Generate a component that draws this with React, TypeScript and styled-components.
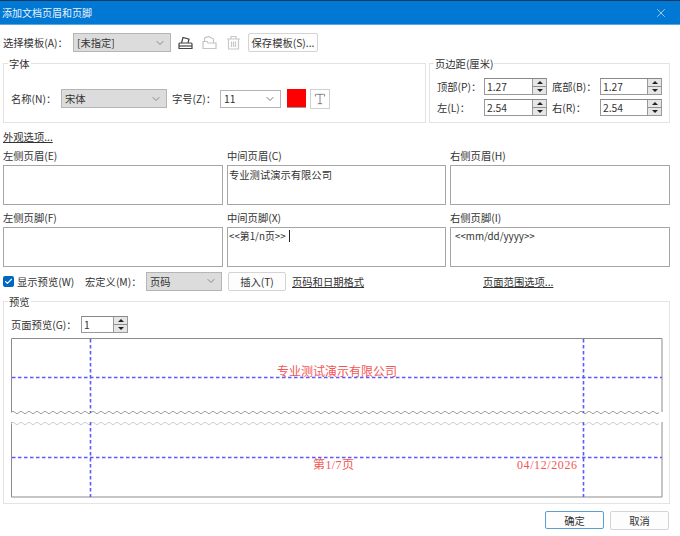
import { ChevronDown, Check, Type, X } from "lucide-react";
import styled, { createGlobalStyle } from "styled-components";

const UI_FONT = `"Noto Sans CJK SC", "Liberation Sans", sans-serif`;
const PREVIEW_FONT = `"Liberation Serif", "Noto Sans CJK SC", serif`;

const GlobalStyle = createGlobalStyle`
  html, body {
    margin: 0;
    padding: 0;
    background: #fff;
  }
  * {
    box-sizing: border-box;
  }
`;

const Dialog = styled.div`
  width: 680px;
  height: 536px;
  overflow: hidden;
  background: #fff;
  color: #333;
  font-family: ${UI_FONT};
  font-size: 10.3px;
  line-height: 13px;
`;

const TitleBar = styled.div`
  height: 25px;
  display: flex;
  align-items: center;
  justify-content: space-between;
  padding: 0 12px 0 2px;
  background: #0078d4;
  border-top: 1px solid #12395f;
  border-bottom: 1px solid #5ba8e4;
  color: #e8f3fc;
  font-size: 10px;
`;

const Body = styled.div`
  padding: 8px 10px 0 3px;
`;

const TemplateRow = styled.div`
  height: 19px;
  display: flex;
  align-items: center;
`;

const FieldLabel = styled.span<{ $width: number; $inset?: number }>`
  flex: none;
  width: ${({ $width }) => $width}px;
  padding-left: ${({ $inset }) => $inset ?? 0}px;
  white-space: nowrap;
`;

const Select = styled.div<{ $width: number; $plain?: boolean }>`
  flex: none;
  width: ${({ $width }) => $width}px;
  height: ${({ $plain }) => ($plain ? 18 : 19)}px;
  display: flex;
  align-items: center;
  justify-content: space-between;
  padding: 0 4px 0 3px;
  background: ${({ $plain }) => ($plain ? "#fff" : "#dcdcdc")};
  border: 1px solid #b5b5b5;
  color: #333;
`;

const IconGroup = styled.div`
  display: flex;
  align-items: center;
  gap: 9px;
  margin: 0 7px 0 7px;
`;

const PushButton = styled.button<{ $width: number; $primary?: boolean }>`
  flex: none;
  width: ${({ $width }) => $width}px;
  height: ${({ $primary }) => ($primary ? 18 : 19)}px;
  padding: 0;
  background: #fdfdfd;
  border: 1px solid ${({ $primary }) => ($primary ? "#5a9fd4" : "#d4d4d4")};
  border-radius: 2px;
  color: #333;
  font: inherit;
`;

const GroupRow = styled.div`
  display: grid;
  grid-template-columns: 423px 241px;
  column-gap: 3px;
  margin-top: 11px;
  height: 60px;
`;

const Group = styled.div`
  position: relative;
  border: 1px solid #e3e3e3;
`;

const Legend = styled.span`
  position: absolute;
  top: -7px;
  left: 4px;
  padding: 0 1px;
  background: #fff;
`;

const FontRow = styled.div`
  display: flex;
  align-items: center;
  height: 19px;
  margin-top: 25px;
  padding-left: 7px;
`;

const Swatch = styled.div`
  flex: none;
  width: 19px;
  height: 19px;
  margin-left: 6px;
  background: #ff0000;
  border-bottom: 1px solid #999;
`;

const StyleToggle = styled.div`
  flex: none;
  width: 20px;
  height: 20px;
  display: flex;
  align-items: center;
  justify-content: center;
  margin-left: 4px;
  border: 1px solid #d0d0d0;
  color: #555;
`;

const MarginGrid = styled.div`
  display: grid;
  grid-template-columns: 47px 68px 48px 62px;
  grid-auto-rows: 17px;
  row-gap: 4px;
  align-items: center;
  padding: 14px 0 0 7px;
`;

const SpinBox = styled.div<{ $width: number }>`
  display: flex;
  width: ${({ $width }) => $width}px;
  height: 17px;
  background: #fff;
  border: 1px solid #999;
  border-top-color: #888;
`;

const SpinInput = styled.input`
  flex: 1;
  min-width: 0;
  padding: 0 0 0 2px;
  border: none;
  outline: none;
  background: transparent;
  color: #333;
  font: inherit;
`;

const SpinArrows = styled.div`
  flex: none;
  width: 14px;
  display: grid;
  grid-template-rows: 1fr 1fr;
  gap: 1px;
  background: #8f8f8f;
  border-left: 1px solid #999;
`;

const SpinArrow = styled.div<{ $down?: boolean }>`
  display: flex;
  align-items: center;
  justify-content: center;
  background: #e6e6e6;

  &::after {
    content: "";
    border-left: 3px solid transparent;
    border-right: 3px solid transparent;
    ${({ $down }) => ($down ? "border-top: 3px solid #222;" : "border-bottom: 3px solid #222;")}
  }
`;

const LinkLine = styled.div`
  margin-top: 8px;
  height: 11px;
  line-height: 11px;
`;

const UnderLink = styled.a<{ $width?: number }>`
  flex: none;
  width: ${({ $width }) => ($width ? `${$width}px` : "auto")};
  color: #333;
  white-space: nowrap;
  text-decoration: underline;
`;

const FieldsGrid = styled.div`
  display: grid;
  grid-template-columns: 220px 219px 220px;
  column-gap: 4px;
  row-gap: 6px;
  margin-top: 7px;
`;

const Field = styled.div`
  display: flex;
  flex-direction: column;
  height: 56px;
`;

const FieldCaption = styled.div`
  height: 16px;
`;

const TextBox = styled.div<{ $indent?: number; $small?: boolean }>`
  height: 40px;
  padding: 2px 0 0 ${({ $indent }) => $indent ?? 1}px;
  border: 1px solid #a6a6a6;
  font-size: ${({ $small }) => ($small ? "9.8px" : "inherit")};
  white-space: nowrap;
`;

const Caret = styled.span`
  display: inline-block;
  width: 1px;
  height: 12px;
  margin-left: 3px;
  background: #222;
  vertical-align: -2px;
`;

const OptionsRow = styled.div`
  display: flex;
  align-items: center;
  height: 18px;
  margin-top: 5px;
`;

const CheckMark = styled.span`
  flex: none;
  width: 11px;
  height: 11px;
  margin-right: 3px;
  display: flex;
  align-items: center;
  justify-content: center;
  background: #0067c0;
  border-radius: 2px;
  color: #fff;
`;

const InsertSlot = styled.div`
  margin: 0 6px;
`;

const PreviewGroup = styled(Group)`
  height: 203px;
  margin-top: 11px;
  padding: 14px 7px 0;
`;

const PageRow = styled.div`
  display: flex;
  align-items: center;
  height: 17px;
`;

const Sheet = styled.svg`
  display: block;
  width: 652px;
  height: 160px;
  margin-top: 5px;
`;

const Footer = styled.div`
  display: flex;
  justify-content: flex-end;
  gap: 6px;
  margin-top: 7px;
  padding-right: 1px;
`;

const wave = (y: number) => {
  let d = `M0 ${y}`;
  for (let x = 0; x < 648; x += 4) {
    d += ` q2 ${x % 8 === 0 ? -2.6 : 2.6} 4 0`;
  }
  return d;
};

function LoadIcon({ color }: { color: string }) {
  return (
    <svg width="15" height="15" viewBox="0 0 15 15" fill="none" stroke={color} strokeWidth="1.2">
      <path d="M1 13.5h13v-4.5a1 1 0 0 0-1-1H2a1 1 0 0 0-1 1z" />
      <path d="M3.5 8l1.5-5.5 6 1.7-1 3.8" />
      <path d="M1 11h13" />
    </svg>
  );
}

function SaveIcon({ color }: { color: string }) {
  return (
    <svg width="15" height="15" viewBox="0 0 15 15" fill="none" stroke={color} strokeWidth="1.2">
      <path d="M1 13.5V6.5h4l1 1.5h8v5.5z" />
      <path d="M2.5 6.5V3l4-1.5 5 2.5v4" />
    </svg>
  );
}

function TrashIcon({ color }: { color: string }) {
  return (
    <svg width="15" height="15" viewBox="0 0 15 15" fill="none" stroke={color} strokeWidth="1.2">
      <path d="M1 4h13M5 4V1.5h5V4M2.5 4v10h10V4M5.5 6.5V12M7.5 6.5V12M9.5 6.5V12" />
    </svg>
  );
}

function Spinner({ value, width }: { value: string; width: number }) {
  return (
    <SpinBox $width={width}>
      <SpinInput readOnly value={value} />
      <SpinArrows>
        <SpinArrow />
        <SpinArrow $down />
      </SpinArrows>
    </SpinBox>
  );
}

export default function App() {
  return (
    <Dialog>
      <GlobalStyle />
      <TitleBar>
        <span>添加文档页眉和页脚</span>
        <X size={14} strokeWidth={1.2} color="#dcecf9" />
      </TitleBar>

      <Body>
        <TemplateRow>
          <FieldLabel $width={70}>选择模板(A)：</FieldLabel>
          <Select $width={98}>
            [未指定]
            <ChevronDown size={12} color="#888" />
          </Select>
          <IconGroup>
            <LoadIcon color="#444" />
            <SaveIcon color="#c4c4c4" />
            <TrashIcon color="#c8c8c8" />
          </IconGroup>
          <PushButton $width={70}>保存模板(S)...</PushButton>
        </TemplateRow>

        <GroupRow>
          <Group>
            <Legend>字体</Legend>
            <FontRow>
              <FieldLabel $width={50}>名称(N)：</FieldLabel>
              <Select $width={106}>
                宋体
                <ChevronDown size={12} color="#888" />
              </Select>
              <FieldLabel $width={53} $inset={5}>
                字号(Z)：
              </FieldLabel>
              <Select $width={61} $plain>
                11
                <ChevronDown size={12} color="#777" />
              </Select>
              <Swatch />
              <StyleToggle>
                <Type size={14} strokeWidth={1.2} />
              </StyleToggle>
            </FontRow>
          </Group>
          <Group>
            <Legend>页边距(厘米)</Legend>
            <MarginGrid>
              <span>顶部(P)：</span>
              <Spinner value="1.27" width={63} />
              <span>底部(B)：</span>
              <Spinner value="1.27" width={62} />
              <span>左(L)：</span>
              <Spinner value="2.54" width={63} />
              <span>右(R)：</span>
              <Spinner value="2.54" width={62} />
            </MarginGrid>
          </Group>
        </GroupRow>

        <LinkLine>
          <UnderLink>外观选项...</UnderLink>
        </LinkLine>

        <FieldsGrid>
          <Field>
            <FieldCaption>左侧页眉(E)</FieldCaption>
            <TextBox />
          </Field>
          <Field>
            <FieldCaption>中间页眉(C)</FieldCaption>
            <TextBox>专业测试演示有限公司</TextBox>
          </Field>
          <Field>
            <FieldCaption>右侧页眉(H)</FieldCaption>
            <TextBox />
          </Field>
          <Field>
            <FieldCaption>左侧页脚(F)</FieldCaption>
            <TextBox />
          </Field>
          <Field>
            <FieldCaption>中间页脚(X)</FieldCaption>
            <TextBox $small $indent={1}>
              {"<<第1/n页>>"}
              <Caret />
            </TextBox>
          </Field>
          <Field>
            <FieldCaption>右侧页脚(I)</FieldCaption>
            <TextBox $small $indent={4}>
              {"<<mm/dd/yyyy>>"}
            </TextBox>
          </Field>
        </FieldsGrid>

        <OptionsRow>
          <CheckMark>
            <Check size={9} strokeWidth={3} />
          </CheckMark>
          <FieldLabel $width={68}>显示预览(W)</FieldLabel>
          <FieldLabel $width={61}>宏定义(M)：</FieldLabel>
          <Select $width={76}>
            页码
            <ChevronDown size={12} color="#888" />
          </Select>
          <InsertSlot>
            <PushButton $width={58}>插入(T)</PushButton>
          </InsertSlot>
          <UnderLink $width={191}>页码和日期格式</UnderLink>
          <UnderLink>页面范围选项...</UnderLink>
        </OptionsRow>

        <PreviewGroup>
          <Legend>预览</Legend>
          <PageRow>
            <FieldLabel $width={70}>页面预览(G)：</FieldLabel>
            <Spinner value="1" width={47} />
          </PageRow>
          <Sheet viewBox="0 0 652 160">
            <g fill="none" stroke="#8c8c8c" strokeWidth="1">
              <path d="M0.5 74V0.5H651V74" />
              <path d="M0.5 84V159H651V84" />
              <path d={wave(74.5)} stroke="#a0a0a0" />
              <path d={wave(85.5)} stroke="#cfcfcf" />
            </g>
            <g fill="none" stroke="#5a5aff" strokeWidth="1.6" strokeDasharray="3.5 2.5">
              <path d="M79.5 1V75M79.5 84V159" />
              <path d="M572.5 1V75M572.5 84V159" />
              <path d="M1 39.5H651M1 119.5H651" />
            </g>
            <g fill="#f45555" fontFamily={PREVIEW_FONT} fontSize="12">
              <text x="266" y="38">专业测试演示有限公司</text>
              <text x="302" y="131" textLength="41">第1/7页</text>
              <text x="506" y="131" textLength="60">04/12/2026</text>
            </g>
          </Sheet>
        </PreviewGroup>

        <Footer>
          <PushButton $width={59} $primary>确定</PushButton>
          <PushButton $width={59}>取消</PushButton>
        </Footer>
      </Body>
    </Dialog>
  );
}
